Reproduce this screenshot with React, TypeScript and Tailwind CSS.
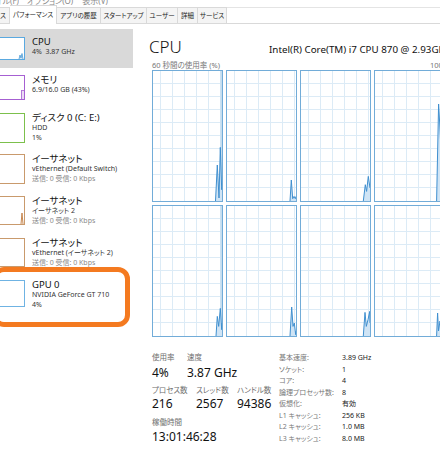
import React from "react";

type Pt = [number, number];

const sideItems = [
  {
    title: "CPU",
    lines: ["4%  3.87 GHz"],
    row: "h-[39px] pt-[7px] bg-[#d9d9d9]",
    thumb: "h-[23px] border-[#5aa9e0]",
    kind: "cpu",
  },
  {
    title: "メモリ",
    lines: ["6.9/16.0 GB (43%)"],
    row: "h-[38px] pt-[6px]",
    thumb: "h-[25px] border-[#a660d2]",
    kind: "mem",
  },
  {
    title: "ディスク 0 (C: E:)",
    lines: ["HDD", "1%"],
    row: "h-[41px] pt-[6px]",
    thumb: "h-[30px] border-[#7cc04c]",
    kind: "none",
  },
  {
    title: "イーサネット",
    lines: ["vEthernet (Default Switch)", "送信: 0 受信: 0 Kbps"],
    row: "h-[42px] pt-[6px]",
    thumb: "h-[30px] border-[#c99a6c]",
    kind: "none",
  },
  {
    title: "イーサネット",
    lines: ["イーサネット 2", "送信: 0 受信: 0 Kbps"],
    row: "h-[42px] pt-[6px]",
    thumb: "h-[29px] border-[#c99a6c]",
    kind: "eth",
  },
  {
    title: "イーサネット",
    lines: ["vEthernet (イーサネット 2)", "送信: 0 受信: 0 Kbps"],
    row: "h-[42px] pt-[6px]",
    thumb: "h-[29px] border-[#c99a6c]",
    kind: "none",
  },
  {
    title: "GPU 0",
    lines: ["NVIDIA GeForce GT 710", "4%"],
    row: "h-[42px] pt-[6px]",
    thumb: "h-[27px] border-[#6fb3e3]",
    kind: "none",
  },
];

const cells: { pts: Pt[]; band?: boolean }[] = [
  { pts: [[62.5, 130], [64.3, 94], [66, 127], [67.3, 76.4], [68.7, 118.7], [69, 116]], band: true },
  { pts: [[63, 130], [64.3, 109], [65.7, 127.7], [67, 125.4], [68.3, 127.7], [69, 125.4]] },
  { pts: [[62.3, 130], [64.3, 113.7], [65.6, 120.4], [67.3, 105.4], [69, 117]] },
  { pts: [[61.6, 130], [63.6, 33], [65, 58], [66.5, 90], [68, 120], [69, 110]] },
  { pts: [[63, 130], [64.3, 110.4], [65.7, 120.4], [67.3, 102.4], [68.7, 123.7], [69, 117]], band: true },
  { pts: [[63, 130], [64.7, 101], [66, 120.4], [67.3, 117], [68.7, 128.7], [69, 125]] },
  { pts: [[62.3, 130], [64, 106.4], [65.3, 120.4], [67, 113.7], [68.7, 105.4], [69, 117]] },
  { pts: [[61.6, 130], [62.6, 107], [63.5, 125], [65, 115], [67, 128], [69, 120]] },
];

function Thumb({ kind }: { kind: string }) {
  if (kind === "cpu")
    return (
      <svg className="absolute inset-0" width="24" height="21">
        <polygon points="19,21 20,17 21,20 22,15.5 23,21" fill="#d3e7f6" />
        <polyline points="19,21 20,17 21,20 22,15.5 23,21" fill="none" stroke="#4a9bd6" strokeWidth="0.8" />
      </svg>
    );
  if (kind === "mem")
    return (
      <svg className="absolute inset-0" width="24" height="23">
        <rect x="21" y="14.5" width="3" height="9" fill="#eadcf4" />
        <line x1="21.5" y1="14.5" x2="21.5" y2="23" stroke="#a660d2" strokeWidth="0.8" />
        <line x1="21" y1="14.5" x2="24" y2="14.5" stroke="#a660d2" strokeWidth="0.8" />
      </svg>
    );
  if (kind === "eth")
    return (
      <svg className="absolute inset-0" width="24" height="27">
        <polyline points="21,27 22,16 23,27" fill="none" stroke="#c27b3e" strokeWidth="0.9" />
      </svg>
    );
  return null;
}

function Cell({ pts, band }: { pts: Pt[]; band?: boolean }) {
  const vx = [7.5, 19.5, 31.5, 43.5, 55.5, 67.5];
  const hy = [1, 2, 3, 4, 5, 6, 7, 8, 9].map((i) => i * 13 - 0.5);
  const line = pts.map((p) => p.join(",")).join(" ");
  const area = `${line} 69,130 ${pts[0][0]},130`;
  return (
    <div className="border border-[#72acd8] bg-white">
      <svg className="block" width="69" height="130">
        {vx.map((x) => (
          <line key={`v${x}`} x1={x} y1="0" x2={x} y2="130" stroke="#dcebf6" strokeWidth="1" />
        ))}
        {hy.map((y) => (
          <line key={`h${y}`} x1="0" y1={y} x2="69" y2={y} stroke="#dcebf6" strokeWidth="1" />
        ))}
        {band && <rect x="67.3" y="0" width="1.7" height="130" fill="#c3ddf0" />}
        <polygon points={area} fill="#cfe4f5" />
        <polyline points={line} fill="none" stroke="#3f8fcf" strokeWidth="1" />
      </svg>
    </div>
  );
}

const specs: [string, string][] = [
  ["基本速度:", "3.89 GHz"],
  ["ソケット:", "1"],
  ["コア:", "4"],
  ["論理プロセッサ数:", "8"],
  ["仮想化:", "有効"],
  ["L1 キャッシュ:", "256 KB"],
  ["L2 キャッシュ:", "1.0 MB"],
  ["L3 キャッシュ:", "8.0 MB"],
];

const tabs: [string, string][] = [
  ["アプリの履歴", "w-[44px]"],
  ["スタートアップ", "w-[46px]"],
  ["ユーザー", "w-[31px]"],
  ["詳細", "w-[20px]"],
  ["サービス", "w-[29px]"],
];

export default function App() {
  return (
    <div className="relative w-[440px] h-[460px] overflow-hidden bg-white text-[#1a1a1a] [font-family:'Noto_Sans','Noto_Sans_CJK_JP',sans-serif] [font-feature-settings:'palt']">
      {/* menu bar, scrolled mostly out of view */}
      <div className="h-[6px] overflow-hidden flex items-end text-[8px] leading-[11px] text-[#888] whitespace-nowrap">
        <span className="w-[19px] flex justify-end overflow-hidden">ファイル(F)</span>
        <span className="ml-[8px]">オプション(O)</span>
        <span className="ml-[9px]">表示(V)</span>
      </div>

      {/* tabs */}
      <div className="flex h-[18px] items-end border-b border-[#d9d9d9] text-[6.5px] leading-[14px] text-[#222] whitespace-nowrap">
        <div className="w-[10px] h-[16px] flex items-center justify-end overflow-hidden bg-[#f4f4f4] border-t border-r border-[#d9d9d9] pr-[3px]">
          プロセス
        </div>
        <div className="relative z-10 -mb-px h-[19px] w-[47px] bg-white border-t border-r border-[#d9d9d9] flex items-center justify-center">
          パフォーマンス
        </div>
        {tabs.map(([t, w]) => (
          <div
            key={t}
            className={`${w} h-[16px] flex items-center justify-center bg-[#f4f4f4] border-t border-r border-[#d9d9d9]`}
          >
            {t}
          </div>
        ))}
        <div className="flex-1 h-[16px] border-t border-[#e4e4e4]" />
      </div>

      <div className="flex">
        {/* resource list */}
        <div className="w-[133px] shrink-0 pt-[5px]">
          {sideItems.map((it, i) => (
            <div key={i} className={`flex items-start ${it.row}`}>
              <div className={`relative mt-[1px] w-[25px] shrink-0 border-y border-r bg-white ${it.thumb}`}>
                <Thumb kind={it.kind} />
              </div>
              <div className="ml-[7px] whitespace-nowrap">
                <div className="text-[9.5px] leading-[11px] text-[#111]">{it.title}</div>
                {it.lines.map((l, j) => (
                  <div
                    key={j}
                    className={`text-[7px] leading-[10px] whitespace-pre ${
                      j === 1 && it.lines[1].startsWith("送信") ? "text-[#8a8a8a]" : "text-[#333]"
                    }`}
                  >
                    {l}
                  </div>
                ))}
              </div>
            </div>
          ))}
        </div>

        {/* CPU detail */}
        <div className="shrink-0 w-[330px] pl-[19px] pt-[13px]">
          <div className="flex items-baseline whitespace-nowrap">
            <div className="-ml-[3px] w-[120px] text-[17px] leading-[20px] font-light text-[#111]">CPU</div>
            <div className="text-[9.8px] leading-[12px] text-[#111]">Intel(R) Core(TM) i7 CPU 870 @ 2.93GHz</div>
          </div>

          <div className="mt-[3px] flex justify-between w-[297px] text-[7.5px] leading-[10px] text-[#777] whitespace-nowrap">
            <span>60 秒間の使用率 (%)</span>
            <span>100%</span>
          </div>

          <div className="grid grid-cols-[71px_71px_71px_71px] grid-rows-[132px_132px] gap-[3px] w-[293px]">
            {cells.map((c, i) => (
              <Cell key={i} pts={c.pts} band={c.band} />
            ))}
          </div>

          <div className="mt-[15px] flex whitespace-nowrap">
            <div className="w-[127px]">
              <div className="flex text-[7.5px] leading-[10px] text-[#6e6e6e]">
                <span className="w-[35px]">使用率</span>
                <span>速度</span>
              </div>
              <div className="mt-[3px] flex text-[12px] leading-[16px] text-[#111]">
                <span className="w-[35px]">4%</span>
                <span>3.87 GHz</span>
              </div>
              <div className="mt-[4px] flex text-[7.5px] leading-[10px] text-[#6e6e6e]">
                <span className="w-[44px]">プロセス数</span>
                <span className="w-[41px]">スレッド数</span>
                <span>ハンドル数</span>
              </div>
              <div className="mt-[1px] flex text-[12px] leading-[16px] text-[#111]">
                <span className="w-[44px]">216</span>
                <span className="w-[41px]">2567</span>
                <span>94386</span>
              </div>
              <div className="mt-[5px] text-[7.5px] leading-[10px] text-[#6e6e6e]">稼働時間</div>
              <div className="mt-[2px] text-[12px] leading-[16px] text-[#111]">13:01:46:28</div>
            </div>

            <div className="text-[7px] leading-[11.5px]">
              {specs.map(([k, v]) => (
                <div key={k} className="flex">
                  <span className="w-[63px] text-[#777]">{k}</span>
                  <span className="text-[#222]">{v}</span>
                </div>
              ))}
            </div>
          </div>
        </div>
      </div>

      {/* highlight around the GPU entry */}
      <div className="absolute left-[-8px] top-[267px] w-[138px] h-[60px] rounded-[12px] border-[5px] border-[#f47a20]" />
    </div>
  );
}
